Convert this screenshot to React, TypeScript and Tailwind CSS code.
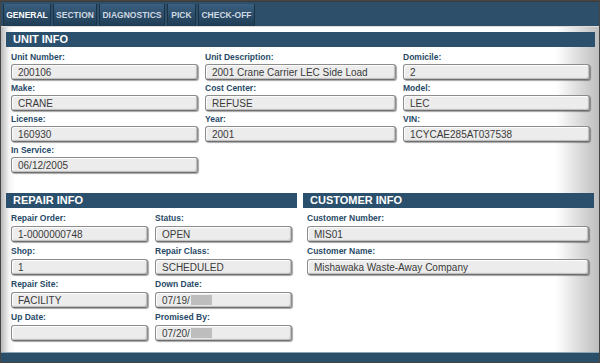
import React from 'react';

const tabs = [
  { name: 'GENERAL', w: 'w-[48px]', active: true },
  { name: 'SECTION', w: 'w-[44px]' },
  { name: 'DIAGNOSTICS', w: 'w-[66px]' },
  { name: 'PICK', w: 'w-[29px]' },
  { name: 'CHECK-OFF', w: 'w-[57px]' },
];

const unitFields = [
  ['Unit Number:', '200106'],
  ['Unit Description:', '2001 Crane Carrier LEC Side Load'],
  ['Domicile:', '2'],
  ['Make:', 'CRANE'],
  ['Cost Center:', 'REFUSE'],
  ['Model:', 'LEC'],
  ['License:', '160930'],
  ['Year:', '2001'],
  ['VIN:', '1CYCAE285AT037538'],
  ['In Service:', '06/12/2005'],
];

function Header({ title }: { title: string }) {
  return (
    <div className="h-[15px] bg-[#2b506d] pl-[7px] text-[11px] leading-[15px] font-bold text-white">
      {title}
    </div>
  );
}

function Input({ value, redact }: { value: string; redact?: boolean }) {
  return (
    <div className="h-[16px] flex items-center rounded-[3px] border border-[#8c8c8c] border-b-[#6e6e6e] bg-[#ececec] pl-[6px] text-[10px] text-[#3a3a3a] shadow-[1px_1px_1px_rgba(0,0,0,0.35),inset_1px_1px_1px_#fff,inset_-1px_-1px_1px_#bdbdbd] whitespace-nowrap overflow-hidden">
      <span>{value}</span>
      {redact && <span className="ml-px w-[21px] h-[10px] bg-[#bdbdbd]" />}
    </div>
  );
}

function Field({ label, value, tall, redact }: { label: string; value: string; tall?: boolean; redact?: boolean }) {
  return (
    <div className="flex flex-col">
      <div className={`${tall ? 'h-[15px] leading-[14px]' : 'h-[13px] leading-[13px]'} text-[8.5px] font-bold text-[#284a68]`}>{label}</div>
      <Input value={value} redact={redact} />
    </div>
  );
}

export default function App() {
  return (
    <div className="w-[600px] h-[363px] border border-[#454545] bg-[#2c4e6a] flex flex-col overflow-hidden" style={{ fontFamily: '"Liberation Sans", Arial, sans-serif' }}>
      <div className="h-[25px] border-t border-[#3c3c3c] flex items-end pl-[2px] gap-[2px] bg-[#2d4f6a]">
        {tabs.map((t) => (
          <div
            key={t.name}
            className={`${t.w} h-[22px] flex items-center justify-center text-[8.5px] font-bold bg-gradient-to-b from-[#3a6080] to-[#1f3c54] border-x border-[#1b3347] ${t.active ? 'text-white' : 'text-[#cfd9e2]'}`}
          >
            {t.name}
          </div>
        ))}
      </div>
      <div className="flex-1 bg-[linear-gradient(to_right,#b9b9b9_0px,#f4f4f4_8px,#ffffff_14px,#ffffff_555px,#bdbdbd_100%)] pt-[5px] pl-[5px] pr-[4px] border-t border-[#dcdcdc]">
        <Header title="UNIT INFO" />
        <div className="mt-[4px] ml-[5px] grid grid-cols-[187px_191px_187px] gap-x-[7px] gap-y-[2px]">
          {unitFields.map(([l, v]) => (
            <Field key={l} label={l} value={v} />
          ))}
        </div>
        <div className="mt-[20px] flex gap-[6px]">
          <div className="w-[291px]">
            <Header title="REPAIR INFO" />
            <div className="mt-[3px] ml-[5px] grid grid-cols-[137px_137px] gap-x-[7px] gap-y-[2px]">
              <Field tall label="Repair Order:" value="1-0000000748" />
              <Field tall label="Status:" value="OPEN" />
              <Field tall label="Shop:" value="1" />
              <Field tall label="Repair Class:" value="SCHEDULED" />
              <Field tall label="Repair Site:" value="FACILITY" />
              <Field tall label="Down Date:" value="07/19/" redact />
              <Field tall label="Up Date:" value="" />
              <Field tall label="Promised By:" value="07/20/" redact />
            </div>
          </div>
          <div className="w-[291px]">
            <Header title="CUSTOMER INFO" />
            <div className="mt-[3px] ml-[4px] w-[282px] flex flex-col gap-y-[2px]">
              <Field tall label="Customer Number:" value="MIS01" />
              <Field tall label="Customer Name:" value="Mishawaka Waste-Away Company" />
            </div>
          </div>
        </div>
      </div>
      <div className="h-[10px] bg-[#2b4e69] border-t border-[#8fa3b3]" />
    </div>
  );
}
